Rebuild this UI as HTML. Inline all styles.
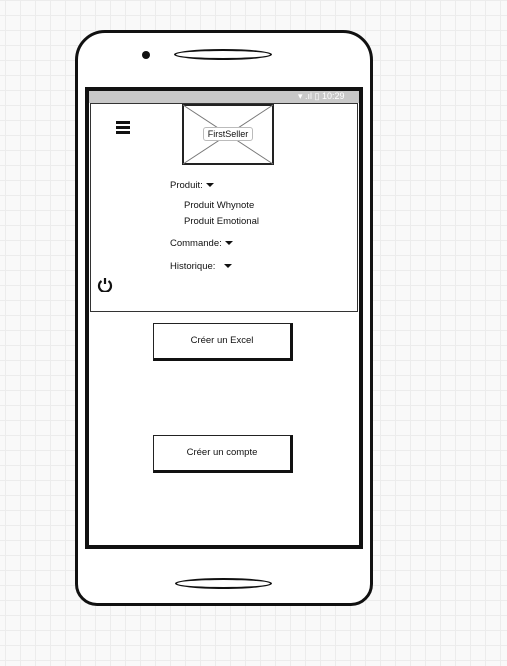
<!DOCTYPE html>
<html><head><style>
html,body{margin:0;padding:0}
body{width:507px;height:666px;position:relative;overflow:hidden;background-color:#f9f9f9;
background-image:linear-gradient(to right,#ececec 1px,transparent 1px),linear-gradient(to bottom,#ececec 1px,transparent 1px);
background-size:15px 15px;background-position:5px 0;font-family:"Liberation Sans",sans-serif;color:#111}
.a{position:absolute;box-sizing:border-box}
.t{position:absolute;font-size:9.5px;white-space:nowrap}
.tri{display:inline-block;width:0;height:0;border-left:4px solid transparent;border-right:4px solid transparent;border-top:4px solid #111;vertical-align:middle;margin-left:3px}
.btn{position:absolute;box-sizing:border-box;background:#fff;border:1px solid #222;border-right:3px solid #111;border-bottom:3px solid #111;font-size:9.5px;text-align:center}
</style></head><body>
<div class="a" style="left:75px;top:30px;width:298px;height:576px;border:3px solid #111;border-radius:30px 30px 22px 22px;background:#fff"></div>
<div class="a" style="left:142px;top:51px;width:8px;height:8px;background:#111;border-radius:50%"></div>
<div class="a" style="left:174px;top:49px;width:98px;height:11px;border:2px solid #111;border-radius:50%"></div>
<div class="a" style="left:175px;top:578px;width:97px;height:11px;border:2px solid #111;border-radius:50%"></div>
<div class="a" style="left:85px;top:87px;width:278px;height:462px;border:4px solid #111;background:#fff"></div>
<div class="a" style="left:89px;top:91px;width:270px;height:12px;background:#c8c8c8"></div>
<div class="t" style="left:298px;top:91px;font-size:9px;color:#fff">▾ .ıl ▯ 10:29</div>
<div class="a" style="left:90px;top:103px;width:268px;height:209px;border:1px solid #333;background:#fff"></div>
<svg class="a" style="left:182px;top:104px" width="92" height="61"><rect x="1" y="1" width="90" height="59" fill="#fff" stroke="#222" stroke-width="2"/><line x1="1" y1="1" x2="91" y2="60" stroke="#777"/><line x1="91" y1="1" x2="1" y2="60" stroke="#777"/></svg>
<div class="a" style="left:203px;top:127px;width:50px;height:14px;border:1px solid #bbb;border-radius:3px;background:#fff;font-size:9px;text-align:center;line-height:12px">FirstSeller</div>
<div class="a" style="left:116px;top:121px;width:14px;height:3px;background:#111"></div>
<div class="a" style="left:116px;top:126px;width:14px;height:3px;background:#111"></div>
<div class="a" style="left:116px;top:131px;width:14px;height:3px;background:#111"></div>
<div class="t" style="left:170px;top:180px">Produit:<span class="tri"></span></div>
<div class="t" style="left:184px;top:200px">Produit Whynote</div>
<div class="t" style="left:184px;top:216px">Produit Emotional</div>
<div class="t" style="left:170px;top:238px">Commande:<span class="tri"></span></div>
<div class="t" style="left:170px;top:261px">Historique: &nbsp;<span class="tri"></span></div>
<svg class="a" style="left:97px;top:276px" width="16" height="16"><path d="M4.5 5 A6 6 0 1 0 11.5 5" fill="none" stroke="#111" stroke-width="2.2"/><line x1="8" y1="2" x2="8" y2="8" stroke="#111" stroke-width="2.2"/></svg>
<div class="btn" style="left:153px;top:323px;width:140px;height:38px;line-height:34px">Créer un Excel</div>
<div class="btn" style="left:153px;top:435px;width:140px;height:38px;line-height:34px">Créer un compte</div>
</body></html>
